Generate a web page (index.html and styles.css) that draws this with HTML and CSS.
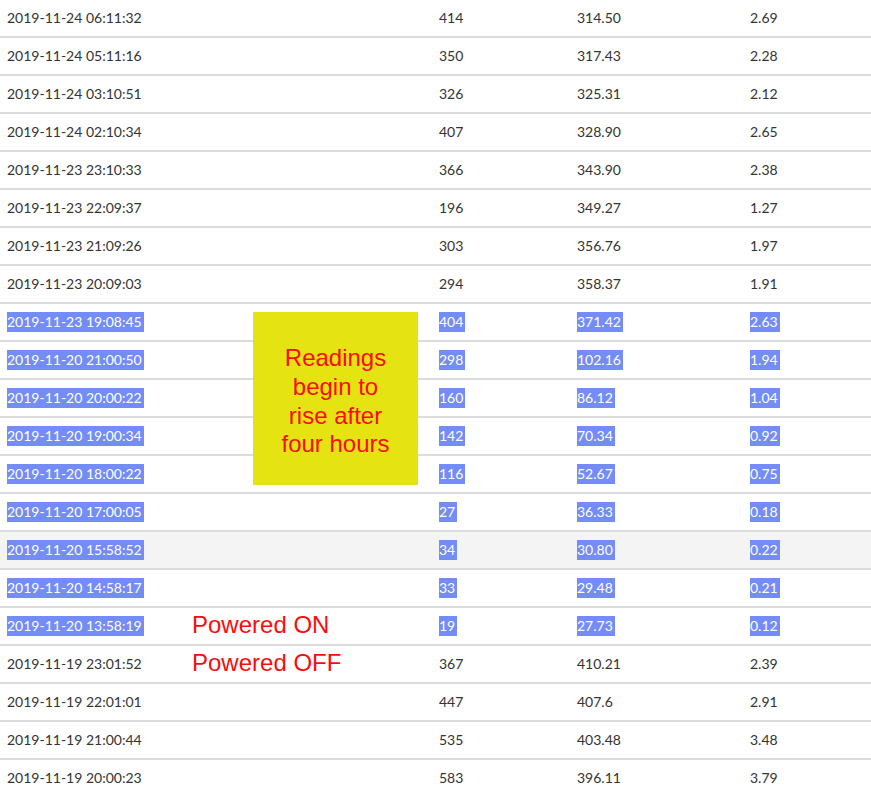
FILE: index.html
```html
<!DOCTYPE html>
<html>
<head>
<meta charset="utf-8">
<link rel="stylesheet" href="styles.css">
</head>
<body>
<div class="page">
  <div class="table">
    <div class="row"><div class="c c1">2019-11-24 06:11:32</div><div class="c c2">414</div><div class="c c3">314.50</div><div class="c c4">2.69</div></div>
    <div class="row"><div class="c c1">2019-11-24 05:11:16</div><div class="c c2">350</div><div class="c c3">317.43</div><div class="c c4">2.28</div></div>
    <div class="row"><div class="c c1">2019-11-24 03:10:51</div><div class="c c2">326</div><div class="c c3">325.31</div><div class="c c4">2.12</div></div>
    <div class="row"><div class="c c1">2019-11-24 02:10:34</div><div class="c c2">407</div><div class="c c3">328.90</div><div class="c c4">2.65</div></div>
    <div class="row"><div class="c c1">2019-11-23 23:10:33</div><div class="c c2">366</div><div class="c c3">343.90</div><div class="c c4">2.38</div></div>
    <div class="row"><div class="c c1">2019-11-23 22:09:37</div><div class="c c2">196</div><div class="c c3">349.27</div><div class="c c4">1.27</div></div>
    <div class="row"><div class="c c1">2019-11-23 21:09:26</div><div class="c c2">303</div><div class="c c3">356.76</div><div class="c c4">1.97</div></div>
    <div class="row"><div class="c c1">2019-11-23 20:09:03</div><div class="c c2">294</div><div class="c c3">358.37</div><div class="c c4">1.91</div></div>
    <div class="row sel"><div class="c c1"><span>2019-11-23 19:08:45</span></div><div class="c c2"><span>404</span></div><div class="c c3"><span>371.42</span></div><div class="c c4"><span>2.63</span></div></div>
    <div class="row sel"><div class="c c1"><span>2019-11-20 21:00:50</span></div><div class="c c2"><span>298</span></div><div class="c c3"><span>102.16</span></div><div class="c c4"><span>1.94</span></div></div>
    <div class="row sel"><div class="c c1"><span>2019-11-20 20:00:22</span></div><div class="c c2"><span>160</span></div><div class="c c3"><span>86.12</span></div><div class="c c4"><span>1.04</span></div></div>
    <div class="row sel"><div class="c c1"><span>2019-11-20 19:00:34</span></div><div class="c c2"><span>142</span></div><div class="c c3"><span>70.34</span></div><div class="c c4"><span>0.92</span></div></div>
    <div class="row sel"><div class="c c1"><span>2019-11-20 18:00:22</span></div><div class="c c2"><span>116</span></div><div class="c c3"><span>52.67</span></div><div class="c c4"><span>0.75</span></div></div>
    <div class="row sel"><div class="c c1"><span>2019-11-20 17:00:05</span></div><div class="c c2"><span>27</span></div><div class="c c3"><span>36.33</span></div><div class="c c4"><span>0.18</span></div></div>
    <div class="row sel hover"><div class="c c1"><span>2019-11-20 15:58:52</span></div><div class="c c2"><span>34</span></div><div class="c c3"><span>30.80</span></div><div class="c c4"><span>0.22</span></div></div>
    <div class="row sel"><div class="c c1"><span>2019-11-20 14:58:17</span></div><div class="c c2"><span>33</span></div><div class="c c3"><span>29.48</span></div><div class="c c4"><span>0.21</span></div></div>
    <div class="row sel"><div class="c c1"><span>2019-11-20 13:58:19</span></div><div class="c c2"><span>19</span></div><div class="c c3"><span>27.73</span></div><div class="c c4"><span>0.12</span></div></div>
    <div class="row"><div class="c c1">2019-11-19 23:01:52</div><div class="c c2">367</div><div class="c c3">410.21</div><div class="c c4">2.39</div></div>
    <div class="row"><div class="c c1">2019-11-19 22:01:01</div><div class="c c2">447</div><div class="c c3">407.6</div><div class="c c4">2.91</div></div>
    <div class="row"><div class="c c1">2019-11-19 21:00:44</div><div class="c c2">535</div><div class="c c3">403.48</div><div class="c c4">3.48</div></div>
    <div class="row"><div class="c c1">2019-11-19 20:00:23</div><div class="c c2">583</div><div class="c c3">396.11</div><div class="c c4">3.79</div></div>
  </div>
  <div class="note">Readings<br>begin to<br>rise after<br>four hours</div>
  <div class="label label-on">Powered ON</div>
  <div class="label label-off">Powered OFF</div>
</div>
</body>
</html>
```

FILE: styles.css
```css
html, body {
  margin: 0;
  padding: 0;
  background: #ffffff;
}
.page {
  position: relative;
  width: 871px;
  height: 789px;
  overflow: hidden;
  font-family: Lato, "Liberation Sans", sans-serif;
  font-size: 14px;
  color: #333333;
}
.table {
  display: flex;
  flex-direction: column;
}
.row {
  display: grid;
  grid-template-columns: 432px 138px 173px 1fr;
  height: 36px;
  border-bottom: 2px solid #dcdcdc;
  align-items: center;
}
.row.hover {
  background: #f4f4f4;
}
.c {
  padding-left: 7px;
  line-height: 20px;
  white-space: nowrap;
}
.sel span {
  background: #748cf8;
  color: #ffffff;
  display: inline-block;
  line-height: 20px;
  padding-right: 2px;
}
.note {
  position: absolute;
  left: 253px;
  top: 312px;
  width: 165px;
  height: 173px;
  background: #e6e313;
  color: #ff0a0a;
  font-family: "Liberation Sans", Arial, sans-serif;
  font-size: 24px;
  line-height: 28.7px;
  text-align: center;
  display: flex;
  align-items: center;
  justify-content: center;
  padding-top: 6px;
  box-sizing: border-box;
}
.label {
  position: absolute;
  left: 192px;
  color: #ff0a0a;
  font-family: "Liberation Sans", Arial, sans-serif;
  font-size: 24px;
  line-height: 28px;
}
.label-on {
  top: 611px;
}
.label-off {
  top: 649px;
}
```
